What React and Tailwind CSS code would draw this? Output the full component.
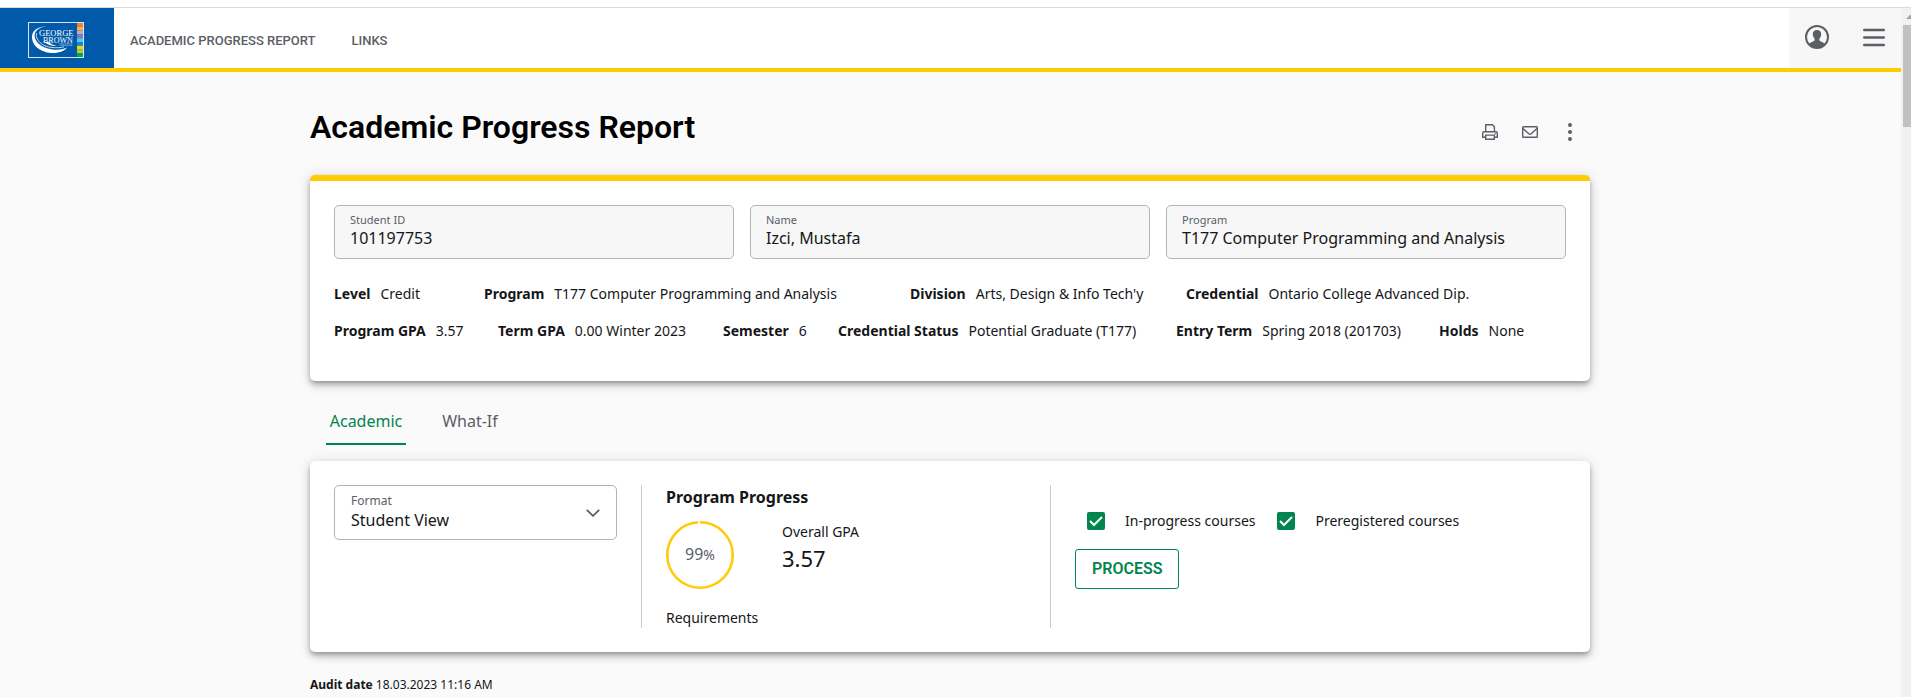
import React from "react";

const SHADOW =
  "shadow-[0_3px_5px_-1px_rgba(0,0,0,0.3),0_5px_8px_0_rgba(0,0,0,0.14),0_1px_14px_0_rgba(0,0,0,0.12)]";

const STRIPES = ["#f58233", "#fbb040", "#c9a3cc", "#7d7fbd", "#5bc5f2", "#0093dd", "#fdd000", "#a6ce39", "#00a651"];

function Logo() {
  return (
    <svg width="56" height="36" viewBox="0 0 56 36" role="img" aria-label="George Brown College">
      <rect x="0.5" y="0.5" width="55" height="35" fill="none" stroke="#dbe6f2" />
      {STRIPES.map((c, i) => (
        <rect key={c} x="49" y={1 + i * 3.8} width="6" height={i === 8 ? 3.6 : 3.8} fill={c} />
      ))}
      <path
        d="M18 4.500C8.500 4.800 4 9.500 4 15c0 10 11 16 21 16 7 0 12-2.500 14-5.500-5 2.300-10 2.800-15.500 1.700C13 25.500 6.300 19.500 6.600 13.200 6.900 8.500 11 5.500 18 4.500z"
        fill="#fff"
      />
      <path d="M8.500 11C7 18 14 24.500 24 25.500c5 .5 9 .2 12-.7" fill="none" stroke="#dbe6f2" strokeWidth="0.900" />
      <path d="M15 19.500c4 2.500 7 4.500 14 4.500-4-.8-6-2-7.500-3.500z" fill="#fff" />
      <text x="11" y="14" fill="#fff" fontFamily="Liberation Serif, serif" fontSize="8.500">GEORGE</text>
      <text x="15" y="20.500" fill="#fff" fontFamily="Liberation Serif, serif" fontSize="8">BROWN</text>
      <text x="31" y="24" fill="#dbe6f2" fontFamily="Liberation Serif, serif" fontSize="3">COLLEGE</text>
    </svg>
  );
}

function UserIcon() {
  return (
    <svg width="24" height="24" viewBox="0 0 24 24" aria-hidden="true">
      <circle cx="12" cy="12" r="11" fill="none" stroke="#5b5e65" strokeWidth="2" />
      <path
        d="M12 5c-2.800 0-4.300 1.700-4.200 4.200.1 2 .8 3.400 1.800 4.500v1.500c-.5 1.200-3.600 1.600-5.600 3.800A10.600 10.600 0 0 0 12 23a10.600 10.600 0 0 0 8-4c-2-2.200-5.100-2.600-5.600-3.800v-1.500c1-1.100 1.700-2.500 1.800-4.500C16.300 6.700 14.800 5 12 5z"
        fill="#5b5e65"
      />
    </svg>
  );
}

function MenuIcon() {
  return (
    <svg width="22" height="19" viewBox="0 0 22 19" fill="none" stroke="#5b5e65" strokeWidth="2.400" strokeLinecap="round" aria-hidden="true">
      <path d="M1.200 2h19.600M1.200 9.500h19.600M1.200 17h19.600" />
    </svg>
  );
}

function PrintIcon() {
  return (
    <svg width="16" height="16" viewBox="0 0 16 16" fill="none" stroke="#5b5e65" strokeWidth="1.400" aria-hidden="true">
      <path d="M3.700 8V.7h6.700l2 2V8M3.500 13.300H.7V9.200c0-.8.600-1.400 1.400-1.400h11.800c.8 0 1.400.6 1.400 1.400v4.100h-2.800" />
      <path d="M3.700 11.100h8.600v4.200H3.700z" />
      <path d="M12.800 9.700h1" />
    </svg>
  );
}

function MailIcon() {
  return (
    <svg width="16" height="12" viewBox="0 0 16 12" fill="none" stroke="#5b5e65" strokeWidth="1.400" strokeLinejoin="round" aria-hidden="true">
      <rect x="0.700" y="0.700" width="14.600" height="10.600" rx="0.800" />
      <path d="M1 2.500l5.800 5.200c.7.600 1.700.6 2.400 0L15 2.500" />
    </svg>
  );
}

function DotsIcon() {
  return (
    <svg width="4" height="18" viewBox="0 0 4 18" fill="#5b5e65" aria-hidden="true">
      <circle cx="2" cy="2" r="2" />
      <circle cx="2" cy="9" r="2" />
      <circle cx="2" cy="16" r="2" />
    </svg>
  );
}

function Field({ id, label, value }) {
  return (
    <div className="flex h-[54px] min-w-0 flex-1 flex-col rounded-[5px] border border-[#b2b3b5] bg-[#f7f7f7] px-[15px] pt-[7px]">
      <label htmlFor={id} className="text-[11px] leading-[14px] text-[#5b5e65]">{label}</label>
      <input id={id} readOnly defaultValue={value} className="h-[22px] w-full bg-transparent text-base leading-[22px] text-[#151618] outline-none" />
    </div>
  );
}

function Fact({ label, value }) {
  return (
    <div className="flex gap-[10px] whitespace-nowrap">
      <dt className="font-bold">{label}</dt>
      <dd>{value}</dd>
    </div>
  );
}

function Check({ id, label }) {
  return (
    <div className="flex items-center gap-5">
      <span className="grid">
        <input id={id} type="checkbox" defaultChecked className="col-start-1 row-start-1 size-[18px] appearance-none rounded-[2px] border-2 border-[#00854f] checked:bg-[#00854f]" />
        <svg className="pointer-events-none col-start-1 row-start-1 place-self-center" width="14" height="11" viewBox="0 0 14 11" fill="none" stroke="#fff" strokeWidth="2" aria-hidden="true">
          <path d="M1 5l4 4L13 1" />
        </svg>
      </span>
      <label htmlFor={id} className="text-sm leading-5">{label}</label>
    </div>
  );
}

export default function App() {
  return (
    <div className="flex h-screen flex-col overflow-hidden bg-[#fafafa] font-['Noto_Sans',sans-serif] text-[#151618]">
      <div className="h-2 shrink-0 border-b border-[#dadbdd] bg-white" />
      <div className="flex min-h-0 flex-1">
        <div className="min-w-0 flex-1">
          <header className="flex h-16 border-b-4 border-[#ffcb05] bg-white">
            <a href="#home" className="flex w-[114px] items-center bg-[#0059a9] pt-1 pl-7">
              <Logo />
            </a>
            <nav className="flex flex-1 items-center gap-9 px-4 pt-[6px] font-['Roboto',sans-serif] text-[13px] font-medium text-[#5b5e65]">
              <a href="#report">ACADEMIC PROGRESS REPORT</a>
              <a href="#links">LINKS</a>
            </nav>
            <div className="flex w-28 items-center justify-between bg-[#f7f7f7] px-4 pb-[2px]">
              <button type="button" aria-label="Account"><UserIcon /></button>
              <button type="button" aria-label="Menu"><MenuIcon /></button>
            </div>
          </header>

          <div className="pr-px">
            <main className="mx-auto w-full max-w-[1280px]">
              <div className="flex h-[103px] items-center justify-between pt-[6px]">
                <h1 className="font-['Roboto',sans-serif] text-[32px] leading-10 font-semibold text-black">Academic Progress Report</h1>
                <div className="flex items-center gap-6 pt-[10px] pr-[18px]">
                  <button type="button" aria-label="Print"><PrintIcon /></button>
                  <button type="button" aria-label="Email"><MailIcon /></button>
                  <button type="button" aria-label="More" className="pl-[6px]"><DotsIcon /></button>
                </div>
              </div>

              <section className={`h-[206px] rounded-[5px] border-t-[6px] border-[#ffcb05] bg-white px-6 pt-6 ${SHADOW}`}>
                <div className="flex gap-4">
                  <Field id="student-id" label="Student ID" value="101197753" />
                  <Field id="student-name" label="Name" value="Izci, Mustafa" />
                  <Field id="program" label="Program" value="T177 Computer Programming and Analysis" />
                </div>
                <dl className="grid grid-cols-[150px_426px_276px_auto] pt-[25px] text-sm leading-5">
                  <Fact label="Level" value="Credit" />
                  <Fact label="Program" value="T177 Computer Programming and Analysis" />
                  <Fact label="Division" value="Arts, Design & Info Tech'y" />
                  <Fact label="Credential" value="Ontario College Advanced Dip." />
                </dl>
                <dl className="grid grid-cols-[164px_225px_115px_338px_263px_auto] pt-[17px] text-sm leading-5">
                  <Fact label="Program GPA" value="3.57" />
                  <Fact label="Term GPA" value="0.00 Winter 2023" />
                  <Fact label="Semester" value="6" />
                  <Fact label="Credential Status" value="Potential Graduate (T177)" />
                  <Fact label="Entry Term" value="Spring 2018 (201703)" />
                  <Fact label="Holds" value="None" />
                </dl>
              </section>

              <div role="tablist" className="flex h-[80px] gap-8 px-4 pt-4 text-base">
                <button type="button" role="tab" aria-selected="true" className="h-12 w-20 border-b-2 border-[#00854f] pt-[2px] text-[#00854f]">Academic</button>
                <button type="button" role="tab" aria-selected="false" className="h-12 w-16 border-b-2 border-transparent pt-[2px] text-[#5b5e65]">What-If</button>
              </div>

              <section className={`flex h-[191px] rounded-[5px] bg-white p-6 ${SHADOW}`}>
                <div className="w-[307px] pr-6">
                  <div className="grid h-[55px] rounded-[5px] border border-[#b2b3b5]">
                    <label htmlFor="format" className="pointer-events-none col-start-1 row-start-1 px-4 pt-[7px] text-xs leading-4 text-[#5b5e65]">Format</label>
                    <select id="format" className="col-start-1 row-start-1 w-full appearance-none bg-transparent px-4 pt-[14px] text-base text-[#151618] outline-none">
                      <option>Student View</option>
                    </select>
                    <svg className="pointer-events-none col-start-1 row-start-1 mr-4 self-center justify-self-end" width="14" height="8" viewBox="0 0 14 8" fill="none" stroke="#5b5e65" strokeWidth="1.800" aria-hidden="true">
                      <path d="M.8.8L7 6.800 13.200.8" />
                    </svg>
                  </div>
                </div>

                <div className="flex w-[410px] flex-col border-x border-[#c9cacc] px-6">
                  <h2 className="text-base leading-6 font-bold">Program Progress</h2>
                  <div className="flex gap-12 pt-3">
                    <div className="grid size-[68px] place-items-center">
                      <svg className="col-start-1 row-start-1" width="68" height="68" viewBox="0 0 68 68" aria-hidden="true">
                        <circle cx="34" cy="34" r="32.750" fill="none" stroke="#ffcb05" strokeWidth="2.500" pathLength="100" strokeDasharray="99 1" transform="rotate(-90 34 34)" />
                      </svg>
                      <span className="col-start-1 row-start-1 pb-[2px] text-base leading-6 text-[#5b5e65]">99<span className="text-sm">%</span></span>
                    </div>
                    <div className="pt-px">
                      <p className="text-sm leading-5">Overall GPA</p>
                      <p className="text-[22px] leading-8">3.57</p>
                    </div>
                  </div>
                  <p className="mt-auto text-sm leading-5">Requirements</p>
                </div>

                <div className="flex-1 pt-[26px] pl-6">
                  <div className="flex gap-[22px] pl-3">
                    <Check id="in-progress" label="In-progress courses" />
                    <Check id="preregistered" label="Preregistered courses" />
                  </div>
                  <button type="button" className="mt-[18px] h-10 rounded-[3px] border border-[#00854f] px-4 font-['Roboto',sans-serif] text-base font-semibold text-[#00854f]">PROCESS</button>
                </div>
              </section>

              <p className="pt-6 text-xs leading-[18px]"><strong>Audit date</strong> 18.03.2023 11:16 AM</p>
            </main>
          </div>
        </div>

        <div className="flex w-[10px] shrink-0 flex-col items-end bg-[#f1f1f1]" aria-hidden="true">
          <svg width="5" height="17" viewBox="0 0 5 17"><path d="M0 11L4 7h1v4z" fill="#a3a3a3" /></svg>
          <div className="h-[102px] w-2 bg-[#c1c1c1]" />
        </div>
      </div>
    </div>
  );
}
